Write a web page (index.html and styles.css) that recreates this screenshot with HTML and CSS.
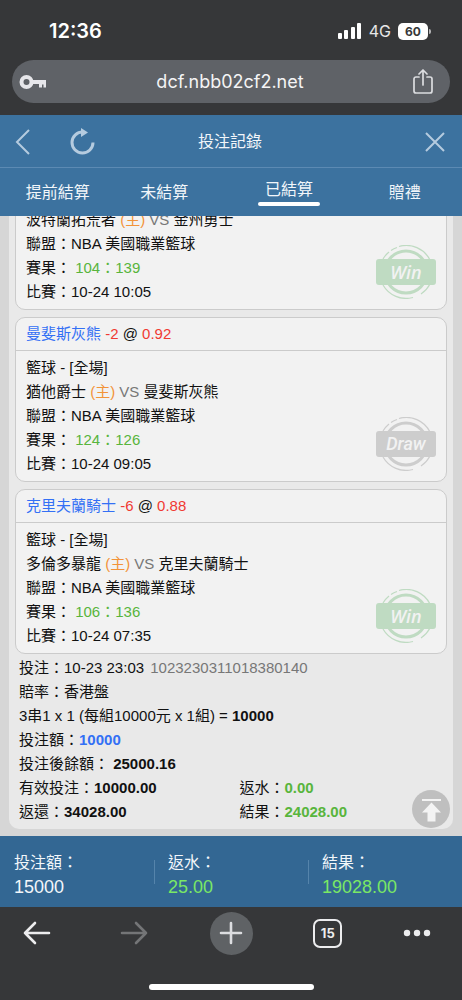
FILE: index.html
```html
<!DOCTYPE html>
<html lang="zh-Hant">
<head>
  <meta charset="UTF-8">
  <meta name="viewport" content="width=device-width, initial-scale=1.0">
  <title>投注記錄</title>
  <link rel="stylesheet" href="styles.css">
</head>
<body>
  <svg class="defs" aria-hidden="true">
    <symbol id="stamp" viewBox="0 0 60 54">
      <g fill="none" stroke="currentColor">
        <circle cx="30" cy="27" r="21" stroke-width="3"/>
        <path d="M23 1.500A26.500 26.500 0 0 1 54 15M15 5.500A26.500 26.500 0 0 1 21 2.500M7 14A26.500 26.500 0 0 1 13 7M7 40A26.500 26.500 0 0 0 37 52.500M54 39A26.500 26.500 0 0 1 45 49" stroke-width="1.200"/>
      </g>
      <rect x="0" y="14" width="60" height="26" rx="3" fill="currentColor"/>
    </symbol>
  </svg>

  <div class="browser-top">
    <div class="status-bar">
      <span class="time">12:36</span>
      <div class="status-icons">
        <svg width="24" height="16" viewBox="0 0 24 16" fill="#fff">
          <rect x="0" y="10" width="4" height="6" rx="1"/>
          <rect x="6" y="7" width="4" height="9" rx="1"/>
          <rect x="13" y="4" width="4" height="12" rx="1"/>
          <rect x="19" y="0" width="4" height="16" rx="1"/>
        </svg>
        <span class="network">4G</span>
        <span class="battery">60</span>
      </div>
    </div>
    <div class="url-bar">
      <svg width="28" height="16" viewBox="0 0 28 16">
        <circle cx="7.500" cy="8" r="5" fill="none" stroke="#e6e6ea" stroke-width="4"/>
        <path d="M12 6h15v7.500h-2.500v-3h-1.500v3h-3v-3.500h-8z" fill="#e6e6ea"/>
      </svg>
      <input type="text" value="dcf.nbb02cf2.net" aria-label="網址">
      <button class="share" aria-label="分享">
        <svg width="20" height="26" viewBox="0 0 20 26" fill="none" stroke="#dcdde0" stroke-width="1.7" stroke-linecap="round" stroke-linejoin="round">
          <path d="M6 8H3a2 2 0 0 0-2 2v12a2 2 0 0 0 2 2h14a2 2 0 0 0 2-2V10a2 2 0 0 0-2-2h-3M10 16V2M6 5l4-4 4 4"/>
        </svg>
      </button>
    </div>
  </div>

  <header class="header">
    <div class="title-bar">
      <div class="nav-buttons">
        <button aria-label="返回">
          <svg width="16" height="26" viewBox="0 0 16 26" fill="none" stroke="#b5cbdf" stroke-width="2"><path d="M14 1L2 13l12 12"/></svg>
        </button>
        <button aria-label="重新整理">
          <svg width="26" height="28" viewBox="0 0 26 28">
            <path d="M14 4A10.500 10.500 0 1 0 24 14.500" fill="none" stroke="#b5cbdf" stroke-width="3"/>
            <path d="M12 0l7 4.500-7 4.500z" fill="#b5cbdf"/>
          </svg>
        </button>
      </div>
      <h1>投注記錄</h1>
      <button class="close" aria-label="關閉">
        <svg width="20" height="20" viewBox="0 0 20 20" fill="none" stroke="#b5cbdf" stroke-width="2"><path d="M1 1l18 18M19 1L1 19"/></svg>
      </button>
    </div>
    <nav class="tabs">
      <a href="#early">提前結算</a>
      <a href="#open">未結算</a>
      <a href="#settled" class="active">已結算</a>
      <a href="#gift">贈禮</a>
    </nav>
  </header>

  <main class="records">
    <div class="ticket">
      <section class="bet">
        <div class="bet-body">
          <p>波特蘭拓荒者 <span class="home">(主)</span> <span class="vs">VS</span> 金州勇士</p>
          <p>聯盟：NBA 美國職業籃球</p>
          <p>賽果： <span class="green">104：139</span></p>
          <p>比賽：10-24 10:05</p>
        </div>
        <div class="stamp win"><svg><use href="#stamp"/></svg><span>Win</span></div>
      </section>

      <section class="bet">
        <h2><span class="blue">曼斐斯灰熊</span> <span class="red">-2</span> @ <span class="red">0.92</span></h2>
        <div class="bet-body">
          <p>籃球 - [全場]</p>
          <p>猶他爵士 <span class="home">(主)</span> <span class="vs">VS</span> 曼斐斯灰熊</p>
          <p>聯盟：NBA 美國職業籃球</p>
          <p>賽果： <span class="green">124：126</span></p>
          <p>比賽：10-24 09:05</p>
        </div>
        <div class="stamp draw"><svg><use href="#stamp"/></svg><span>Draw</span></div>
      </section>

      <section class="bet">
        <h2><span class="blue">克里夫蘭騎士</span> <span class="red">-6</span> @ <span class="red">0.88</span></h2>
        <div class="bet-body">
          <p>籃球 - [全場]</p>
          <p>多倫多暴龍 <span class="home">(主)</span> <span class="vs">VS</span> 克里夫蘭騎士</p>
          <p>聯盟：NBA 美國職業籃球</p>
          <p>賽果： <span class="green">106：136</span></p>
          <p>比賽：10-24 07:35</p>
        </div>
        <div class="stamp win"><svg><use href="#stamp"/></svg><span>Win</span></div>
      </section>

      <div class="summary">
        <p>投注：10-23 23:03 <span class="ticket-id">1023230311018380140</span></p>
        <p>賠率：香港盤</p>
        <p>3串1 x 1 (每組10000元 x 1組) = <b>10000</b></p>
        <p>投注額：<b class="blue">10000</b></p>
        <p>投注後餘額： <b>25000.16</b></p>
        <div class="pair">
          <p>有效投注：<b>10000.00</b></p>
          <p>返水：<b class="green">0.00</b></p>
          <p>返還：<b>34028.00</b></p>
          <p>結果：<b class="green">24028.00</b></p>
        </div>
      </div>
    </div>
    <button class="to-top" aria-label="回到頂部">
      <svg width="38" height="38" viewBox="0 0 38 38" fill="#f3f3f3"><path d="M10 9h19v2H10zM19.500 12.500l9.500 10h-5.500v9h-8v-9H10z"/></svg>
    </button>
  </main>

  <footer class="totals">
    <div><span>投注額：</span><span class="amount">15000</span></div>
    <div><span>返水：</span><span class="amount plus">25.00</span></div>
    <div><span>結果：</span><span class="amount plus">19028.00</span></div>
  </footer>

  <div class="browser-bottom">
    <div class="toolbar">
      <button aria-label="上一頁">
        <svg width="28" height="24" viewBox="0 0 28 24" fill="none" stroke="#ececee" stroke-width="2.600" stroke-linecap="round" stroke-linejoin="round"><path d="M26 12H2M12 2L2 12l10 10"/></svg>
      </button>
      <button aria-label="下一頁">
        <svg width="28" height="24" viewBox="0 0 28 24" fill="none" stroke="#747577" stroke-width="2.600" stroke-linecap="round" stroke-linejoin="round"><path d="M2 12h24M16 2l10 10-10 10"/></svg>
      </button>
      <button class="new-tab" aria-label="新分頁">
        <svg width="24" height="24" viewBox="0 0 24 24" stroke="#dcdde0" stroke-width="2.600" stroke-linecap="round"><path d="M12 2v20M2 12h20"/></svg>
      </button>
      <button aria-label="分頁"><span class="tab-count">15</span></button>
      <button class="more" aria-label="更多">
        <svg width="28" height="8" viewBox="0 0 28 8" fill="#ececee"><circle cx="4" cy="4" r="3.200"/><circle cx="14" cy="4" r="3.200"/><circle cx="24" cy="4" r="3.200"/></svg>
      </button>
    </div>
    <div class="home-indicator"></div>
  </div>
</body>
</html>
```
FILE: styles.css
```css
* {
  box-sizing: border-box;
}
body {
  margin: 0;
  height: 100vh;
  display: flex;
  flex-direction: column;
  font-family: "Liberation Sans", "Noto Sans CJK TC", sans-serif;
  font-size: 15px;
  line-height: 24px;
  color: #111;
  background: #d6d6d6;
}
h1, h2, p {
  margin: 0;
  font-size: inherit;
  font-weight: normal;
}
button {
  padding: 0;
  border: 0;
  background: none;
  font: inherit;
  color: inherit;
  cursor: pointer;
}
svg {
  display: block;
}
.defs {
  position: absolute;
  width: 0;
  height: 0;
}

/* browser chrome */
.browser-top {
  flex: none;
  padding: 0 12px 12px;
  background: #363739;
  color: #fff;
  font-family: Inter, sans-serif;
}
.status-bar {
  height: 60px;
  padding: 2px 22px 0 37px;
  display: flex;
  align-items: center;
  justify-content: space-between;
}
.time {
  font-size: 20px;
  font-weight: 600;
}
.status-icons {
  display: flex;
  align-items: center;
  gap: 7px;
}
.network {
  font-size: 16px;
  color: #e8e8e8;
}
.battery {
  position: relative;
  width: 30px;
  height: 17px;
  border-radius: 5px;
  background: #fff;
  color: #363739;
  font-size: 12px;
  font-weight: 700;
  line-height: 17px;
  text-align: center;
}
.battery::after {
  content: "";
  position: absolute;
  top: 6px;
  right: -3px;
  width: 2px;
  height: 5px;
  border-radius: 0 2px 2px 0;
  background: #b5b5b7;
}
.url-bar {
  height: 43px;
  padding: 0 17px 0 7px;
  display: flex;
  align-items: center;
  border-radius: 22px;
  background: #5f6267;
}
.url-bar input {
  flex: 1;
  min-width: 0;
  padding: 0;
  border: 0;
  background: none;
  color: #f4f4f5;
  font: 18px/24px Inter, sans-serif;
  text-align: center;
}

/* page header */
.header {
  flex: none;
  background: #3c729f;
  color: #f2f6fa;
  font-size: 16px;
}
.title-bar {
  height: 53px;
  padding: 1px 17px 0 15px;
  display: grid;
  grid-template-columns: 1fr auto 1fr;
  align-items: center;
  border-bottom: 1px solid #5c8ab3;
}
.nav-buttons {
  display: flex;
  align-items: center;
  gap: 38px;
}
.close {
  justify-self: end;
}
.tabs {
  height: 48px;
  padding: 1px 18px 0 0;
  display: grid;
  grid-template-columns: 25fr 21fr 33fr 17fr;
  align-items: center;
  justify-items: center;
}
.tabs a {
  color: inherit;
  text-decoration: none;
}
.tabs .active::after {
  content: "";
  display: block;
  height: 4px;
  margin: 0 -7px;
  border-radius: 2px;
  background: #fff;
}
.tabs .active {
  padding-bottom: 2px;
}

/* bet records */
.records {
  position: relative;
  flex: 1;
  min-height: 0;
  padding: 0 9px 7px;
  display: flex;
  flex-direction: column;
  justify-content: flex-end;
  overflow: hidden;
}
.ticket {
  padding: 0 6px 5px;
  border-radius: 0 0 10px 10px;
  background: #e9e9e9;
}
.bet {
  position: relative;
  margin-bottom: 7px;
  border: 1px solid #cbcbcb;
  border-radius: 10px;
  background: #f2f2f2;
}
.bet h2 {
  padding: 4px 10px;
  border-bottom: 1px solid #cbcbcb;
}
.bet-body {
  padding: 5px 10px;
}
.blue {
  color: #3370f5;
}
.red {
  color: #f03a32;
}
.green {
  color: #58b53c;
}
.home {
  color: #f29339;
}
.vs {
  color: #777;
}
.stamp {
  position: absolute;
  right: 10px;
  bottom: 10px;
  display: grid;
  place-items: center;
  font-family: "Open Sans", sans-serif;
  font-size: 18px;
  font-style: italic;
  font-weight: 600;
}
.stamp svg,
.stamp span {
  grid-area: 1 / 1;
}
.stamp svg {
  width: 60px;
  height: 54px;
}
.stamp span {
  color: #f2f2f2;
}
.win {
  color: #bfdbc2;
}
.draw {
  color: #cdcdcd;
  font-family: Roboto, sans-serif;
  font-weight: 500;
}
.summary {
  padding: 0 4px;
  margin-top: -5px;
}
.ticket-id {
  margin-left: 2px;
  color: #777;
}
.pair {
  display: grid;
  grid-template-columns: 13fr 12fr;
}
.to-top {
  position: absolute;
  right: 12px;
  bottom: 8px;
  border-radius: 50%;
  background: #bfbfbf;
}

/* totals */
.totals {
  flex: none;
  height: 71px;
  display: grid;
  grid-template-columns: repeat(3, 1fr);
  align-items: center;
  background: #336793;
  color: #f2f6fa;
  font-size: 16px;
}
.totals div {
  padding: 6px 0 0 14px;
  display: flex;
  flex-direction: column;
  background: linear-gradient(#5584ab, #5584ab) left center / 1px 24px no-repeat;
}
.totals div:first-child {
  background: none;
}
.amount {
  font-size: 18px;
}
.plus {
  color: #7ae865;
}

.browser-bottom {
  flex: none;
  height: 93px;
  padding-top: 4px;
  background: #363739;
  color: #ececee;
}
.toolbar {
  padding: 0 15px;
  display: flex;
  align-items: center;
  justify-content: space-between;
}
.toolbar button {
  width: 44px;
  height: 44px;
  display: grid;
  place-items: center;
}
.toolbar .new-tab {
  width: 43px;
  height: 43px;
  border-radius: 50%;
  background: #5f6265;
}
.toolbar .more {
  justify-items: start;
}
.tab-count {
  width: 29px;
  height: 29px;
  border: 2px solid #ececee;
  border-radius: 7px;
  font: 700 13px/25px Inter, sans-serif;
}
.home-indicator {
  width: 165px;
  height: 6px;
  margin: 29px auto 0;
  border-radius: 3px;
  background: #fff;
}
```
